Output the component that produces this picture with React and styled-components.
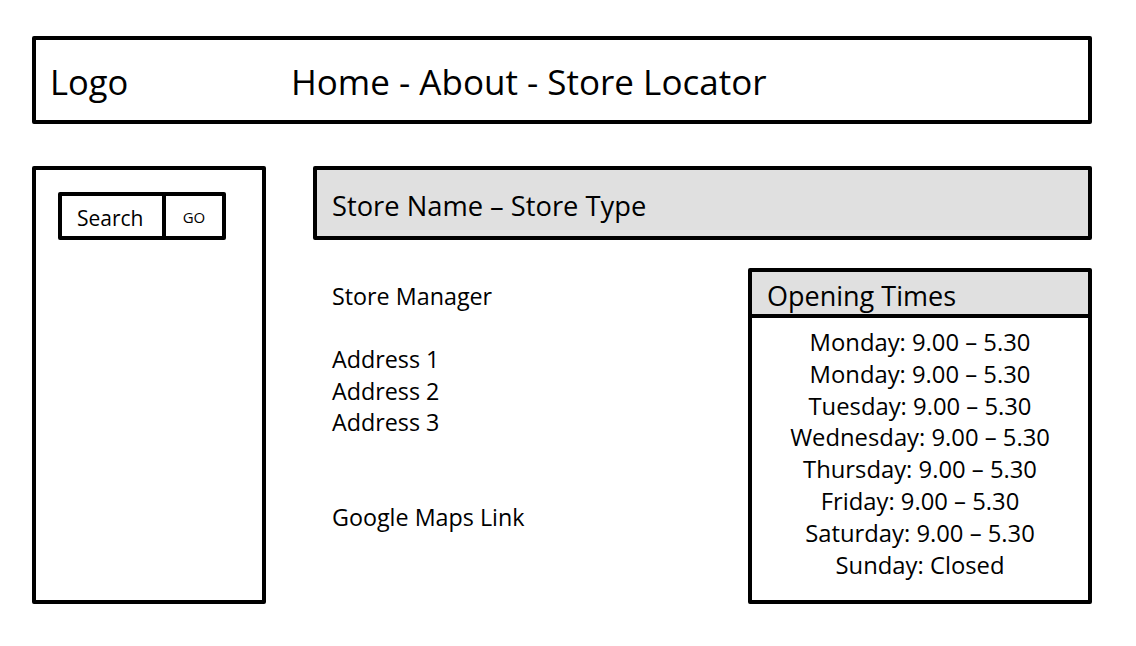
import React from "react";
import styled, { createGlobalStyle } from "styled-components";

const Global = createGlobalStyle`
  html, body { margin: 0; padding: 0; background: #fff; }
  body { font-family: "Open Sans", "Liberation Sans", sans-serif; color: #000; }
`;

const Page = styled.div`
  width: 1136px;
  height: 646px;
  box-sizing: border-box;
  padding: 36px 44px 0 32px;
  display: flex;
  flex-direction: column;
  gap: 42px;
`;

const Header = styled.header`
  box-sizing: border-box;
  height: 88px;
  border: 4px solid #000;
  border-radius: 2px;
  display: flex;
  align-items: center;
  padding: 3px 0 0 14px;
  font-size: 34.5px;
`;

const Logo = styled.div`
  width: 241px;
`;

const Nav = styled.nav`
  font-size: 35px;
`;

const Body = styled.div`
  display: flex;
  gap: 47px;
`;

const Sidebar = styled.aside`
  box-sizing: border-box;
  width: 234px;
  height: 438px;
  border: 4px solid #000;
  border-radius: 2px;
  padding: 22px 0 0 22px;
`;

const SearchBox = styled.div`
  display: flex;
  width: 168px;
  height: 48px;
  box-sizing: border-box;
  border: 4px solid #000;
  border-radius: 2px;
`;

const SearchField = styled.div`
  width: 104px;
  border-right: 4px solid #000;
  display: flex;
  align-items: center;
  padding-left: 15px;
  box-sizing: border-box;
  font-size: 21px;
  padding-top: 4px;
`;

const GoButton = styled.div`
  flex: 1;
  display: flex;
  align-items: center;
  justify-content: center;
  font-size: 15px;
  padding-top: 2px;
`;

const Main = styled.main`
  flex: 1;
  display: flex;
  flex-direction: column;
  gap: 28px;
`;

const TitleBar = styled.div`
  box-sizing: border-box;
  height: 74px;
  border: 4px solid #000;
  border-radius: 2px;
  background: #e0e0e0;
  display: flex;
  align-items: center;
  padding: 5px 0 0 15px;
  font-size: 27.3px;
`;

const Row = styled.div`
  display: flex;
  justify-content: space-between;
`;

const Info = styled.div`
  padding: 13px 0 0 19px;
  font-size: 23.3px;
  line-height: 31.5px;
`;

const Line = styled.div`
  min-height: 31.5px;
`;

const Hours = styled.div`
  box-sizing: border-box;
  width: 344px;
  height: 336px;
  border: 4px solid #000;
  border-radius: 2px;
  display: flex;
  flex-direction: column;
`;

const HoursHead = styled.div`
  height: 46px;
  border-bottom: 4px solid #000;
  background: #e0e0e0;
  font-size: 27px;
  display: flex;
  align-items: center;
  padding: 4px 0 0 15px;
  box-sizing: border-box;
`;

const HoursList = styled.div`
  padding-top: 9px;
  text-align: center;
  font-size: 23.8px;
  line-height: 31.8px;
`;

const days = [
  "Monday: 9.00 – 5.30",
  "Monday: 9.00 – 5.30",
  "Tuesday: 9.00 – 5.30",
  "Wednesday: 9.00 – 5.30",
  "Thursday: 9.00 – 5.30",
  "Friday: 9.00 – 5.30",
  "Saturday: 9.00 – 5.30",
  "Sunday: Closed",
];

export default function App() {
  return (
    <>
      <Global />
      <Page>
        <Header>
          <Logo>Logo</Logo>
          <Nav>Home - About - Store Locator</Nav>
        </Header>
        <Body>
          <Sidebar>
            <SearchBox>
              <SearchField>Search</SearchField>
              <GoButton>GO</GoButton>
            </SearchBox>
          </Sidebar>
          <Main>
            <TitleBar>Store Name – Store Type</TitleBar>
            <Row>
              <Info>
                <Line>Store Manager</Line>
                <Line />
                <Line>Address 1</Line>
                <Line>Address 2</Line>
                <Line>Address 3</Line>
                <Line />
                <Line />
                <Line>Google Maps Link</Line>
              </Info>
              <Hours>
                <HoursHead>Opening Times</HoursHead>
                <HoursList>
                  {days.map((d, i) => (
                    <div key={i}>{d}</div>
                  ))}
                </HoursList>
              </Hours>
            </Row>
          </Main>
        </Body>
      </Page>
    </>
  );
}
